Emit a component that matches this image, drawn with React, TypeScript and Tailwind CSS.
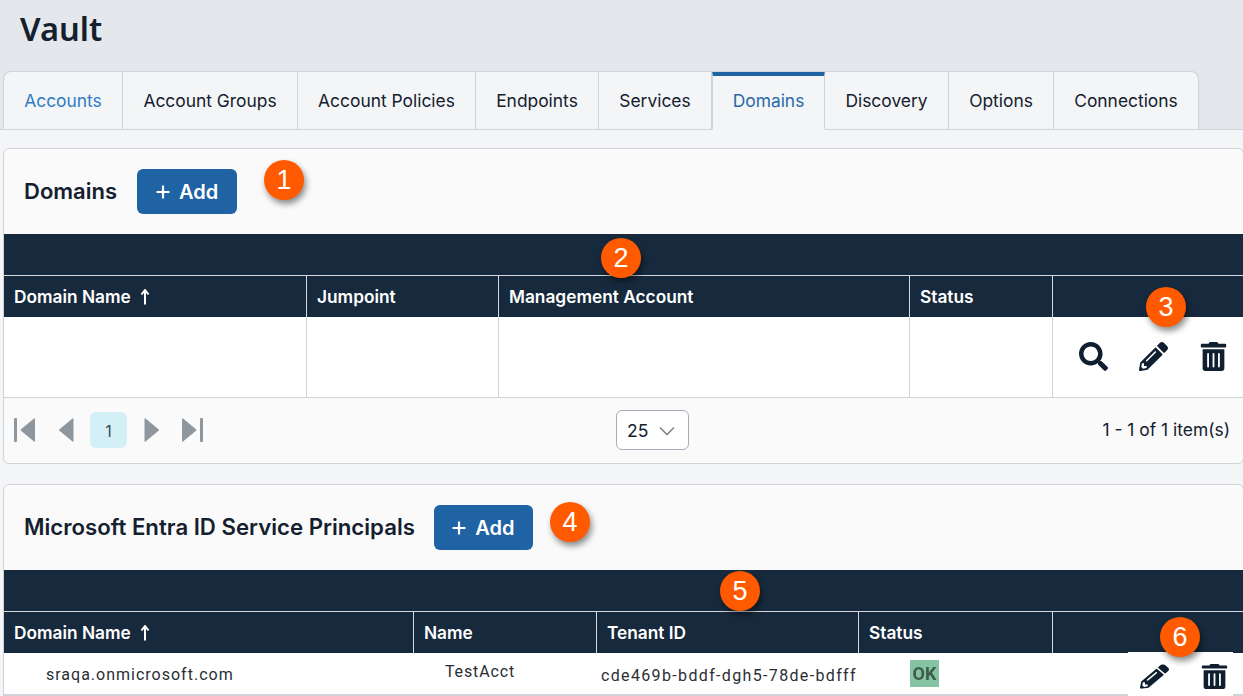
import { FaPencilAlt, FaSearch, FaTrashAlt } from "react-icons/fa"

const inter = "font-['Inter',sans-serif]"

const tabs = [
  { label: "Accounts", width: "w-[119px]", blue: true },
  { label: "Account Groups", width: "w-[175px]" },
  { label: "Account Policies", width: "w-[178px]" },
  { label: "Endpoints", width: "w-[123px]" },
  { label: "Services", width: "w-[113px]" },
  { label: "Domains", width: "w-[113px]", active: true },
  { label: "Discovery", width: "w-[124px]" },
  { label: "Options", width: "w-[105px]" },
  { label: "Connections", width: "w-[144px]" },
]

function Badge({ n, className }: { n: number; className: string }) {
  return (
    <div className={`absolute w-10 h-10 rounded-full bg-[#ff5a00] text-white text-[27px] flex items-center justify-center font-['Liberation_Sans',sans-serif] shadow-[2px_4px_6px_rgba(0,0,0,0.45)] z-10 ${className}`}>
      {n}
    </div>
  )
}

function AddButton({ className }: { className: string }) {
  return (
    <button className={`h-[45px] rounded-md bg-[#1f63a5] text-white text-[20px] font-semibold flex items-center justify-center gap-[9px] ${className}`}>
      <svg width="14" height="14" viewBox="0 0 14 14">
        <path d="M7 0.5v13M0.5 7h13" stroke="white" strokeWidth="2.2" />
      </svg>
      Add
    </button>
  )
}

function HeaderRow({ cols, names }: { cols: string; names: string[] }) {
  return (
    <>
      <div className="h-[41px] bg-[#172a3d] border-b border-[#d5d8dc] box-content" />
      <div className={`grid ${cols} h-[41px] bg-[#172a3d] text-white text-[17.3px] font-semibold`}>
        {names.map((name, i) => (
          <div key={i} className="border-r border-[#d5d8dc] last:border-r-0 pl-[10px] flex items-center gap-[9px]">
            {name}
            {i === 0 && (
              <svg width="10" height="16" viewBox="0 0 10 16">
                <path d="M5 15.5V2M1.5 5.5 5 1l3.5 4.5" fill="none" stroke="white" strokeWidth="2" />
              </svg>
            )}
          </div>
        ))}
      </div>
    </>
  )
}

function Triangle({ flip }: { flip?: boolean }) {
  return (
    <svg width="15" height="24" viewBox="7 0 14 24" fill="#8f979e" className={flip ? "rotate-180" : ""}>
      <path d="M21 1v22q0 1-1 .6L7 12.8q-1-.8 0-1.6L20 .4q1-.4 1 .6z" />
    </svg>
  )
}

function EdgeTriangle({ flip }: { flip?: boolean }) {
  return (
    <svg width="21" height="24" viewBox="0 0 21 24" fill="#8f979e" className={flip ? "rotate-180" : ""}>
      <rect x="0" y="0" width="3" height="24" rx="1" />
      <path d="M21 1v22q0 1-1 .6L7 12.8q-1-.8 0-1.6L20 .4q1-.4 1 .6z" />
    </svg>
  )
}

export default function App() {
  return (
    <div className={`relative w-[1243px] h-[696px] overflow-hidden bg-[#f4f5f7] text-[#14202e] ${inter}`}>
      <div className="h-[71px] bg-[#e4e7ec] pl-5 pt-[6px]">
        <h1 className="font-['Noto_Sans',sans-serif] text-[32.6px] leading-[45px] font-semibold text-[#14202e]">Vault</h1>
      </div>

      <div className="h-[59px] bg-[#e4e7ec] pl-[3px] flex border-b border-[#d0d3d8]">
        <div className="flex h-[59px] rounded-t-lg overflow-hidden border-t border-l border-r border-[#d0d3d8] bg-[#f4f5f7]">
          {tabs.map((t) => (
            <div
              key={t.label}
              className={`${t.width} flex items-center justify-center pt-[2px] text-[17.4px] border-r border-[#d0d3d8] last:border-r-0 border-b ${
                t.active ? "border-t-[5px] border-t-[#1f63a5] border-b-[#f4f5f7] border-l -mt-px pb-[4px] text-[#2a69a8]" : t.blue ? "text-[#2f7cc4]" : ""
              }`}
            >
              {t.label}
            </div>
          ))}
        </div>
      </div>

      <div className="pl-[3px] pt-[18px] flex flex-col gap-[20px]">
        <section className="w-[1241px] h-[316px] rounded-md border border-[#d0d3d8] bg-[#fafafa] overflow-hidden">
          <div className="h-[85px] flex items-center pl-5 gap-5">
            <h2 className="text-[22px] font-semibold">Domains</h2>
            <AddButton className="w-[100px]" />
          </div>
          <HeaderRow cols="grid-cols-[303px_192px_411px_143px_1fr]" names={["Domain Name", "Jumpoint", "Management Account", "Status", ""]} />
          <div className="grid grid-cols-[303px_192px_411px_143px_1fr] h-[81px] bg-white border-b border-[#d0d3d8]">
            <div className="border-r border-[#d0d3d8]" />
            <div className="border-r border-[#d0d3d8]" />
            <div className="border-r border-[#d0d3d8]" />
            <div className="border-r border-[#d0d3d8]" />
            <div className="flex items-center pl-[26px] pb-[2px] gap-[31px] text-[#0f1f30]">
              <FaSearch size={29} />
              <FaPencilAlt size={29} />
              <FaTrashAlt size={29} />
            </div>
          </div>
          <div className="relative h-[65px] flex items-center justify-between pl-[10px] pr-[13px]">
            <div className="flex items-center pb-[2px]">
              <EdgeTriangle />
              <div className="ml-[24px]">
                <Triangle />
              </div>
              <div className="ml-[16px] w-[37px] h-[36px] rounded-md bg-[#d4f0f7] flex items-center justify-center pt-[3px] text-[16px] text-[#3c4a58]">1</div>
              <div className="ml-[17px]">
                <Triangle flip />
              </div>
              <div className="ml-[23px]">
                <EdgeTriangle flip />
              </div>
            </div>
            <div className="absolute left-[612px] top-[12px] w-[73px] h-[40px] rounded-md border border-[#a7adb8] bg-white flex items-center pl-[10px] pt-[2px] gap-[11px] text-[17.5px]">
              25
              <svg width="16" height="10" viewBox="0 0 16 10">
                <path d="M1 1.5 8 8.5 15 1.5" fill="none" stroke="#7f8891" strokeWidth="1.7" />
              </svg>
            </div>
            <div className="text-[17.4px]">1 - 1 of 1 item(s)</div>
          </div>
        </section>

        <section className="w-[1241px] h-[260px] rounded-t-md border border-[#d0d3d8] bg-[#fafafa] overflow-hidden">
          <div className="h-[85px] flex items-center pl-5 gap-5">
            <h2 className="text-[22.2px] font-semibold whitespace-nowrap pb-px">Microsoft Entra ID Service Principals</h2>
            <AddButton className="w-[99px] -ml-px" />
          </div>
          <HeaderRow cols="grid-cols-[410px_183px_262px_194px_1fr]" names={["Domain Name", "Name", "Tenant ID", "Status", ""]} />
          <div className="grid grid-cols-[410px_183px_262px_194px_1fr] h-[41px] bg-white font-['Roboto',sans-serif] text-[16px] text-[#2a2e33]">
            <div className="pl-[42px] flex items-center pt-[3px] tracking-[1px]">sraqa.onmicrosoft.com</div>
            <div className="pl-[31px] flex items-center pb-[3px] tracking-[0.85px]">TestAcct</div>
            <div className="pl-[4px] flex items-center pt-[5px] whitespace-nowrap tracking-[1.35px]">cde469b-bddf-dgh5-78de-bdfff</div>
            <div className="pl-[51px] flex items-center">
              <div className="w-[29px] h-[27px] bg-[#85c3a3] text-[#3d5c4c] text-[18px] font-bold flex items-center justify-center">
                <span className="blur-[0.6px]">OK</span>
              </div>
            </div>
            <div />
          </div>
          <div className="h-[2px] bg-[#d0d3d8]" />
        </section>
      </div>

      <div className="absolute left-[1128px] top-[652px] w-[105px] h-[44px] bg-white flex items-center pl-[12px] gap-[31px] pt-[4px] text-[#0f1f30]">
        <FaPencilAlt size={29} className="scale-y-[0.85]" />
        <FaTrashAlt size={29} className="scale-y-[0.87]" />
      </div>

      <Badge n={1} className="left-[264px] top-[160px]" />
      <Badge n={2} className="left-[601px] top-[238px]" />
      <Badge n={3} className="left-[1146px] top-[287px]" />
      <Badge n={4} className="left-[550px] top-[502px]" />
      <Badge n={5} className="left-[720px] top-[571px]" />
      <Badge n={6} className="left-[1160px] top-[617px]" />
    </div>
  )
}
